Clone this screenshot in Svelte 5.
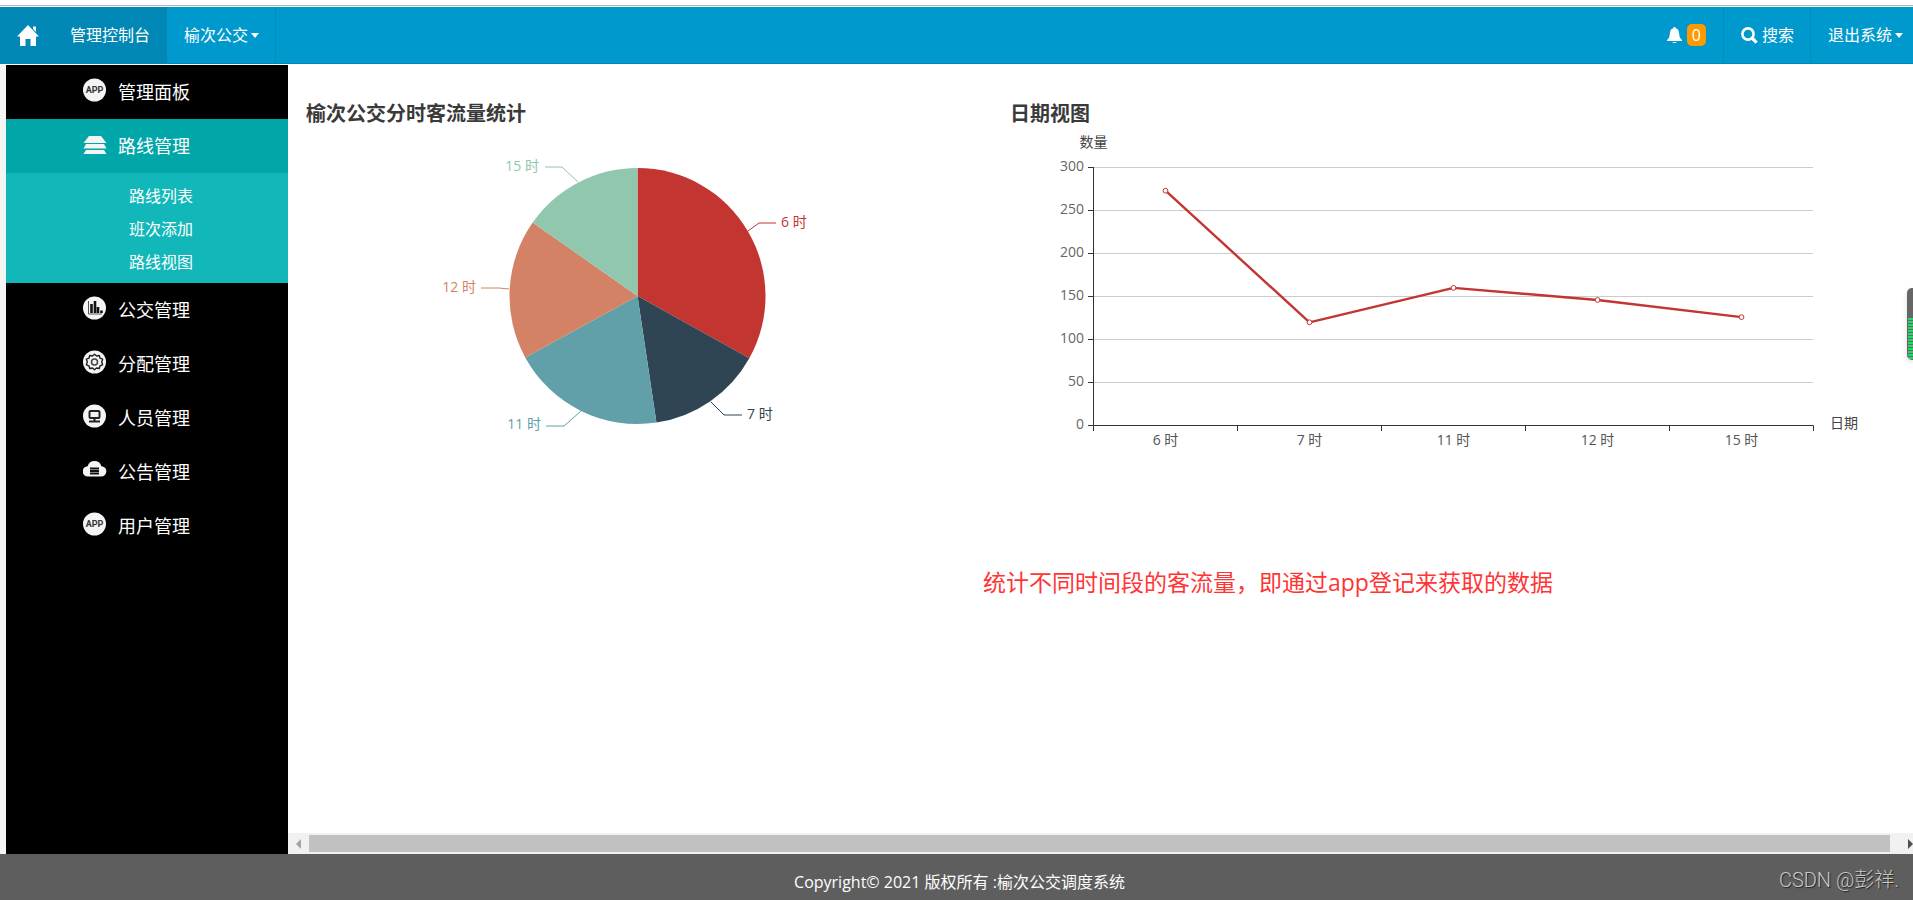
<script lang="ts">
  /**
   * Bus dispatch console: passenger flow by hour
   */

  interface Flow {
    hour: string;
    value: number;
    color: string;
    /** Leader line from the slice edge to the label */
    leader: string;
    label: { x: number; y: number; anchor: 'start' | 'end' };
  }

  const flows: Flow[] = [
    { hour: '6 时', value: 273, color: '#c23531', leader: '442,105 453,97 470,97', label: { x: 475, y: 101, anchor: 'start' } },
    { hour: '7 时', value: 120, color: '#2f4554', leader: '405,276 418,289 436,289', label: { x: 441, y: 293, anchor: 'start' } },
    { hour: '11 时', value: 160, color: '#61a0a8', leader: '275,285 258,300 240,300', label: { x: 235, y: 303, anchor: 'end' } },
    { hour: '12 时', value: 146, color: '#d48265', leader: '203,163 193,162 175,162', label: { x: 170, y: 166, anchor: 'end' } },
    { hour: '15 时', value: 126, color: '#91c7ae', leader: '272,56 256,41 239,41', label: { x: 233, y: 45, anchor: 'end' } },
  ];

  const menu = [
    { name: '管理面板', icon: 'app' },
    { name: '路线管理', icon: 'layers', children: ['路线列表', '班次添加', '路线视图'] },
    { name: '公交管理', icon: 'bars' },
    { name: '分配管理', icon: 'gear' },
    { name: '人员管理', icon: 'screen' },
    { name: '公告管理', icon: 'cloud' },
    { name: '用户管理', icon: 'app' },
  ];

  let open = $state('路线管理');

  // Pie
  const cx = 331.5;
  const cy = 170;
  const radius = 128;
  const total = flows.reduce((sum, f) => sum + f.value, 0);

  function point(fraction: number): string {
    const a = fraction * Math.PI * 2;
    return `${cx + radius * Math.sin(a)},${cy - radius * Math.cos(a)}`;
  }

  const slices = flows.map((flow, i) => {
    const start = flows.slice(0, i).reduce((sum, f) => sum + f.value, 0) / total;
    const end = start + flow.value / total;
    return { ...flow, d: `M${cx},${cy} L${point(start)} A${radius},${radius} 0 0 1 ${point(end)} Z` };
  });

  // Line chart
  const left = 83.5;
  const bottom = 299.5;
  const step = 144;
  const ticks = [0, 50, 100, 150, 200, 250, 300];
  const scaleX = (i: number) => left + step * (i + 0.5);
  const scaleY = (value: number) => bottom - value * 0.86;
  const line = flows.map((f, i) => `${scaleX(i)},${scaleY(f.value)}`).join(' ');
</script>

<div class="page">
  <nav class="navbar">
    <a class="navbar__item navbar__item--home" href="#home" aria-label="首页">
      <svg width="22" height="21" viewBox="0 0 22 21" fill="#fff">
        <path d="M11 0 22 11.5H19V21H13.5V14H8.5V21H3V11.5H0Z" />
        <path d="M16 1.5H19V7L16 4Z" />
      </svg>
    </a>
    <a class="navbar__item navbar__item--current" href="#console">管理控制台</a>
    <button type="button" class="navbar__item navbar__item--site">榆次公交<span class="caret"></span></button>
    <div class="navbar__right">
      <a class="navbar__item navbar__item--bell" href="#messages" aria-label="消息">
        <svg width="15" height="17" viewBox="0 0 15 17" fill="#fff">
          <path d="M7.5 0C8.4 0 8.7.6 8.7 1.3 11.4 2 12 4.3 12.2 7 12.4 10 13 11.5 15 13V14H0V13C2 11.5 2.6 10 2.8 7 3 4.3 3.6 2 6.3 1.3 6.3.6 6.6 0 7.5 0Z" />
          <path d="M5.5 15H9.5C9.3 16.3 5.7 16.3 5.5 15Z" />
        </svg>
        <span class="badge">0</span>
      </a>
      <a class="navbar__item navbar__item--search" href="#search">
        <svg width="17" height="17" viewBox="0 0 17 17" fill="none" stroke="#fff">
          <circle cx="7" cy="7" r="5.6" stroke-width="2.6" />
          <path d="M11 11 15.6 15.6" stroke-width="3.2" />
        </svg>
        搜索
      </a>
      <button type="button" class="navbar__item navbar__item--exit">退出系统<span class="caret"></span></button>
    </div>
  </nav>

  <div class="body">
    <aside class="sidebar">
      {#each menu as item}
        <button
          type="button"
          class="sidebar__item"
          class:sidebar__item--open={open === item.name}
          onclick={() => (open = item.name)}
        >
          <svg class="sidebar__icon" width="24" height="24" viewBox="0 0 24 24" aria-hidden="true">
            {#if item.icon === 'layers'}
              <g fill="#f4f4f4">
                <path d="M6 4H18L23.5 11H.5Z" />
                <path d="M3 12H21L23.5 16.5H.5Z" />
                <path d="M3 18H21L23.5 22H.5Z" />
              </g>
            {:else if item.icon === 'cloud'}
              <path d="M5 18.5A5 5 0 0 1 4.6 8.2 7.2 7.2 0 0 1 18.4 8.2 5 5 0 0 1 18 18.5Z" fill="#f4f4f4" />
              <path d="M7 10.5H16M7 13H16M7 15.500H16" stroke="#111" stroke-width="2.2" />
            {:else}
              <circle cx="11.5" cy="12" r="11.5" fill="#f4f4f4" />
              {#if item.icon === 'app'}
                <text x="11.5" y="15" class="sidebar__glyph">APP</text>
              {:else if item.icon === 'bars'}
                <path d="M5.5 5V18H19" fill="none" stroke="#555" />
                <path d="M8.5 17V8M12 17V5M15 17V11M18.5 17V14.5" stroke="#111" stroke-width="2.6" />
              {:else if item.icon === 'gear'}
                <path
                  d="M11.5 4.2 13.6 6 16.3 5.5 17 8.2 19.6 9.2 18.7 12 19.6 14.8 17 15.8 16.3 18.5 13.6 18 11.5 19.8 9.4 18 6.7 18.5 6 15.8 3.4 14.8 4.3 12 3.4 9.2 6 8.2 6.7 5.5 9.4 6Z"
                  fill="none" stroke="#222" stroke-width="1.4" stroke-linejoin="round"
                />
                <circle cx="11.5" cy="12" r="3" fill="none" stroke="#444" stroke-width="1.5" />
              {:else}
                <rect x="6.5" y="7" width="10" height="7" rx="1" fill="none" stroke="#222" stroke-width="2" />
                <path d="M11.5 14V17M6 17.5H17" stroke="#222" stroke-width="2" />
              {/if}
            {/if}
          </svg>
          {item.name}
        </button>
        {#if item.children && open === item.name}
          <ul class="submenu">
            {#each item.children as child}
              <li><a href="#{child}">{child}</a></li>
            {/each}
          </ul>
        {/if}
      {/each}
    </aside>

    <main class="content">
      <div class="charts">
        <section>
          <h2>榆次公交分时客流量统计</h2>
          <svg class="chart" viewBox="0 0 704 324" role="img" aria-label="榆次公交分时客流量统计">
            {#each slices as slice}
              <path d={slice.d} fill={slice.color} />
              <polyline points={slice.leader} fill="none" stroke={slice.color} />
              <text x={slice.label.x} y={slice.label.y} text-anchor={slice.label.anchor} fill={slice.color}>{slice.hour}</text>
            {/each}
          </svg>
        </section>

        <section>
          <h2>日期视图</h2>
          <svg class="chart" viewBox="0 0 903 324" role="img" aria-label="日期视图">
            <text x={left} y="21" text-anchor="middle" fill="#444">数量</text>
            {#each ticks as tick}
              {@const y = Math.round(scaleY(tick)) - 0.5}
              {#if tick > 0}
                <path d="M{left} {y}H803" stroke="#ccc" />
              {/if}
              <path d="M78 {y}H{left}" stroke="#333" />
              <text x="74" y={y + 3} text-anchor="end" fill="#666">{tick}</text>
            {/each}
            <path d="M{left} 41V{bottom}H803.5" fill="none" stroke="#333" />
            {#each [0, 1, 2, 3, 4, 5] as i}
              <path d="M{left + step * i} {bottom}V305" stroke="#333" />
            {/each}
            <polyline points={line} fill="none" stroke="#c23531" stroke-width="2.4" stroke-linejoin="bevel" />
            {#each flows as flow, i}
              <circle cx={scaleX(i)} cy={scaleY(flow.value)} r="2.4" fill="#fff" stroke="#c23531" />
              <text x={scaleX(i)} y="319" text-anchor="middle" fill="#555">{flow.hour}</text>
            {/each}
            <text x="820" y="302" fill="#444">日期</text>
          </svg>
        </section>
      </div>

      <p class="note">统计不同时间段的客流量，即通过app登记来获取的数据</p>

      <div class="scrollbar">
        <button type="button" class="scrollbar__arrow" aria-label="向左滚动">
          <svg width="5" height="10" viewBox="0 0 5 10"><path d="M5 0V10L0 5Z" fill="#a3a3a3" /></svg>
        </button>
        <div class="scrollbar__thumb"></div>
        <button type="button" class="scrollbar__arrow scrollbar__arrow--right" aria-label="向右滚动">
          <svg width="5" height="10" viewBox="0 0 5 10"><path d="M0 0V10L5 5Z" fill="#505050" /></svg>
        </button>
      </div>
    </main>
  </div>

  <footer class="footer">
    <p>Copyright© 2021 版权所有 :榆次公交调度系统</p>
    <span class="watermark">CSDN @彭祥.</span>
  </footer>

  <div class="meter"></div>
</div>

<style>
  :global(body) {
    margin: 0;
    background: #fff;
  }

  .page {
    display: flex;
    flex-direction: column;
    min-height: 100vh;
    box-sizing: border-box;
    padding-top: 5px;
    font-family: 'Open Sans', 'Noto Sans CJK SC', sans-serif;
    font-size: 16px;
    line-height: 24px;
  }

  button {
    margin: 0;
    padding: 0;
    border: 0;
    background: none;
    color: inherit;
    font: inherit;
    cursor: pointer;
  }

  a {
    color: inherit;
    text-decoration: none;
  }

  /* Top bar */
  .navbar {
    display: flex;
    height: 56px;
    margin-top: 2px;
    border-bottom: 1px solid #0088b8;
    background: #0099cd;
    color: #fff;
    box-shadow: 0 -1px #fff, 0 -2px #b5b5b5;
  }

  .navbar__item {
    display: flex;
    align-items: center;
    box-sizing: border-box;
    white-space: nowrap;
  }

  .navbar__item--home {
    padding: 0 15px 0 17px;
    background: #0087b6;
  }

  .navbar__item--current {
    padding: 0 17px 0 16px;
    background: #0087b6;
  }

  .navbar__item--site {
    padding: 0 16px 0 17px;
    border-right: 1px solid #008ebf;
  }

  .navbar__right {
    display: flex;
    margin-left: auto;
  }

  .navbar__item--bell {
    gap: 5px;
    padding-right: 17px;
  }

  .navbar__item--search {
    gap: 4px;
    padding: 0 16px 0 17px;
    border-left: 1px solid #008ebf;
  }

  .navbar__item--exit {
    padding: 0 10px 0 17px;
    border-left: 1px solid #008ebf;
  }

  .badge {
    padding: 0 5px;
    border-radius: 5px;
    background: #f90;
    line-height: 22px;
  }

  .caret {
    margin-left: 3px;
    border: 4px solid transparent;
    border-top: 5px solid #fff;
    border-bottom: 0;
  }

  .body {
    display: flex;
    flex: 1;
    padding-left: 6px;
    border-top: 1px solid #fff;
    background: #f5f5f5;
  }

  /* Side menu */
  .sidebar {
    flex: none;
    width: 282px;
    background: #000;
    color: #fff;
  }

  .sidebar__item {
    display: flex;
    align-items: center;
    gap: 11px;
    width: 100%;
    height: 54px;
    padding-left: 77px;
    font-size: 18px;
  }

  .sidebar__item--open {
    background: #00a6a8;
  }

  .sidebar__icon {
    margin-bottom: 4px;
  }

  .sidebar__glyph {
    fill: #333;
    font-family: Roboto, sans-serif;
    font-size: 9px;
    font-weight: 700;
    text-anchor: middle;
  }

  .submenu {
    margin: 0;
    padding: 7px 0 4px 123px;
    background: #12b7b9;
    list-style: none;
    line-height: 33px;
  }

  /* Charts */
  .content {
    display: flex;
    flex: 1;
    flex-direction: column;
    min-width: 0;
    background: #fff;
  }

  .charts {
    display: grid;
    grid-template-columns: 704fr 903fr;
    padding: 37px 0 0 18px;
  }

  h2 {
    margin: 0;
    color: #3a3a3a;
    font-size: 20px;
    font-weight: 700;
    line-height: 24px;
  }

  .chart {
    display: block;
    width: 100%;
    font-size: 14px;
  }

  .note {
    margin: 116px 0 24px;
    padding-left: 695px;
    color: #ff3535;
    font-size: 23px;
    line-height: 32px;
  }

  .scrollbar {
    display: flex;
    align-items: center;
    height: 21px;
    margin-top: auto;
    background: #f1f1f1;
  }

  .scrollbar__arrow {
    display: flex;
    justify-content: center;
    width: 21px;
  }

  .scrollbar__arrow--right {
    justify-content: flex-end;
    width: 23px;
  }

  .scrollbar__thumb {
    flex: 1;
    height: 17px;
    background: #c1c1c1;
  }

  /* Footer */
  .footer {
    position: relative;
    height: 46px;
    background: #5e5e5e;
    color: #fff;
    text-align: center;
  }

  .footer p {
    margin: 0;
    padding: 16px 0 0 6px;
  }

  .watermark {
    position: absolute;
    top: 14px;
    right: 14px;
    color: #c8c8c8;
    font-family: Roboto, 'Noto Sans CJK SC', sans-serif;
    font-size: 20px;
    font-weight: 300;
    text-shadow: 1px 1px 1px #222;
  }

  /* Level meter docked to the window edge */
  .meter {
    position: fixed;
    top: 288px;
    right: 0;
    width: 6px;
    height: 72px;
    border-radius: 5px 0 0 5px;
    background:
      repeating-linear-gradient(#22d866 0 2px, #666 2px 3px) 1px 30px / 5px 41px no-repeat,
      #666;
    box-shadow: 0 2px 5px rgba(0, 0, 0, 0.15);
  }
</style>
